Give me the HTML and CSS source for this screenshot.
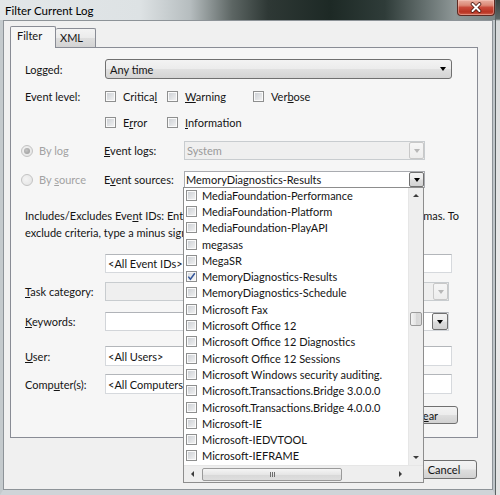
FILE: index.html
```html
<!DOCTYPE html>
<html lang="en">
<head>
<meta charset="utf-8">
<title>Filter Current Log</title>
<link rel="stylesheet" href="styles.css">
</head>
<body>
<div class="screen">
  <div class="window">
    <div class="titlebar">
      <span class="title">Filter Current Log</span>
      <div class="close-btn">
        <svg width="14" height="11" viewBox="0 0 14 11"><path d="M3.5 2 L10.5 9 M10.5 2 L3.5 9" stroke="#4a1710" stroke-width="3.6" stroke-linecap="round"/><path d="M3.5 2 L10.5 9 M10.5 2 L3.5 9" stroke="#fff" stroke-width="2" stroke-linecap="round"/></svg>
      </div>
    </div>
    <div class="frame">
      <div class="client">
        <div class="tabs">
          <div class="tab active">Filter</div>
          <div class="tab xml">XML</div>
        </div>
        <div class="panel">
          <div class="row r-logged">
            <span class="lbl">Logged:</span>
            <div class="combo btn-combo w-wide"><span>Any time</span><span class="arrow"></span></div>
          </div>
          <div class="row r-level1">
            <span class="lbl">Event level:</span>
            <span class="chk c1"><span class="cb"></span><span>Critica<u>l</u></span></span>
            <span class="chk c2"><span class="cb"></span><span><u>W</u>arning</span></span>
            <span class="chk"><span class="cb"></span><span>Ver<u>b</u>ose</span></span>
          </div>
          <div class="row r-level2">
            <span class="lbl"></span>
            <span class="chk c1"><span class="cb"></span><span>E<u>r</u>ror</span></span>
            <span class="chk c2"><span class="cb"></span><span><u>I</u>nformation</span></span>
          </div>
          <div class="row r-bylog">
            <span class="radio-col"><span class="radio on"></span><span>By lo<u>g</u></span></span>
            <span class="lbl2"><u>E</u>vent logs:</span>
            <div class="combo dis-combo w-src"><span>System</span><span class="dbtn dis"><span class="arrow"></span></span></div>
          </div>
          <div class="row r-bysrc">
            <span class="radio-col"><span class="radio"></span><span>By <u>s</u>ource</span></span>
            <span class="lbl2">E<u>v</u>ent sources:</span>
            <div class="sources">
              <div class="combo edit-combo w-src"><span class="src-text">MemoryDiagnostics-Results</span><span class="dbtn"><span class="arrow"></span></span></div>
              <div class="droplist">
                <div class="dl-body">
                  <ul class="dl-items">
                    <li><span class="cb"></span><span>MediaFoundation-Performance</span></li>
                    <li><span class="cb"></span><span>MediaFoundation-Platform</span></li>
                    <li><span class="cb"></span><span>MediaFoundation-PlayAPI</span></li>
                    <li><span class="cb"></span><span>megasas</span></li>
                    <li><span class="cb"></span><span>MegaSR</span></li>
                    <li><span class="cb checked"><svg width="9" height="9" viewBox="0 0 9 9"><path d="M1.3 4.6 L3.4 7.2 L7.8 1.2" fill="none" stroke="#34569a" stroke-width="1.5"/></svg></span><span>MemoryDiagnostics-Results</span></li>
                    <li><span class="cb"></span><span>MemoryDiagnostics-Schedule</span></li>
                    <li><span class="cb"></span><span>Microsoft Fax</span></li>
                    <li><span class="cb"></span><span>Microsoft Office 12</span></li>
                    <li><span class="cb"></span><span>Microsoft Office 12 Diagnostics</span></li>
                    <li><span class="cb"></span><span>Microsoft Office 12 Sessions</span></li>
                    <li><span class="cb"></span><span>Microsoft Windows security auditing.</span></li>
                    <li><span class="cb"></span><span>Microsoft.Transactions.Bridge 3.0.0.0</span></li>
                    <li><span class="cb"></span><span>Microsoft.Transactions.Bridge 4.0.0.0</span></li>
                    <li><span class="cb"></span><span>Microsoft-IE</span></li>
                    <li><span class="cb"></span><span>Microsoft-IEDVTOOL</span></li>
                    <li><span class="cb"></span><span>Microsoft-IEFRAME</span></li>
                  </ul>
                  <div class="vscroll">
                    <span class="sb-box"><span class="tri-up"></span></span>
                    <div class="vtrack"><div class="vthumb"></div></div>
                    <span class="sb-box"><span class="tri-down"></span></span>
                  </div>
                </div>
                <div class="hscroll">
                  <span class="sb-box h"><span class="tri-left"></span></span>
                  <div class="htrack"><div class="hthumb"><span class="grip"></span></div></div>
                  <span class="sb-box h"><span class="tri-right"></span></span>
                  <span class="corner"></span>
                </div>
              </div>
            </div>
          </div>
          <p class="desc">Includes/Excludes Eve<u>n</u>t IDs: Enter ID numbers and/or ID ranges separated by commas. To<br>exclude criteria, type a minus sign first. For example 1,3,5-99,-76</p>
          <div class="row r-ids">
            <span class="lbl"></span>
            <div class="field w-field">&lt;All Event IDs&gt;</div>
          </div>
          <div class="row r-task">
            <span class="lbl"><u>T</u>ask category:</span>
            <div class="combo dis-combo w-cat"><span></span><span class="dbtn dis"><span class="arrow"></span></span></div>
          </div>
          <div class="row r-kw">
            <span class="lbl"><u>K</u>eywords:</span>
            <div class="combo edit-combo w-cat"><span></span><span class="dbtn"><span class="arrow"></span></span></div>
          </div>
          <div class="row r-user">
            <span class="lbl"><u>U</u>ser:</span>
            <div class="field w-field">&lt;All Users&gt;</div>
          </div>
          <div class="row r-comp">
            <span class="lbl">Comp<u>u</u>ter(s):</span>
            <div class="field w-field">&lt;All Computers&gt;</div>
          </div>
          <div class="row r-clear">
            <span class="btn btn-clear"><span>Cl<u>e</u>ar</span></span>
          </div>
        </div>
        <div class="buttons">
          <span class="btn btn-main">OK</span>
          <span class="btn btn-main">Cancel</span>
        </div>
      </div>
    </div>
  </div>
  <div class="bgwin"></div>
</div>
</body>
</html>
```

FILE: styles.css
```css
* { box-sizing: border-box; margin: 0; padding: 0; }
html, body { width: 500px; height: 495px; overflow: hidden; }
body {
  font-family: Lato, "Liberation Sans", sans-serif;
  font-size: 11px;
  color: #141414;
  background: #e4e4e4;
}
u { text-decoration: underline; text-underline-offset: 1px; text-decoration-thickness: 1px; }

.screen { display: flex; width: 500px; height: 495px; }
.window { width: 495px; height: 495px; flex: none; display: flex; flex-direction: column; }

.titlebar {
  height: 20px; flex: none;
  display: flex; justify-content: space-between; align-items: flex-start;
  background: linear-gradient(90deg, #e3e7e9 0, #dde2e4 140px, #b6bdbf 190px, #5d6664 232px, #2e3835 268px, #1d2925 330px, #2f3c39 385px, #65706f 425px, #8e9797 455px, #7b8585 495px);
}
.title { font-size: 11.5px; line-height: 14px; padding: 4px 0 0 5px; color: #000; }
.close-btn {
  width: 38px; height: 16px;
  border: 1px solid #5e2a22; border-top: none; border-radius: 0 0 4px 4px;
  background: linear-gradient(#e9b0a2 0, #dc8977 35%, #c84a3a 50%, #b83322 80%, #cf624e 100%);
  box-shadow: inset 0 0 0 1px rgba(255, 215, 205, 0.4);
  display: flex; align-items: center; justify-content: center;
}

.frame {
  flex: 1; display: flex;
  border-left: 3px solid #c4cacd;
  border-right: 2px solid #bfc5c9;
  border-bottom: 5px solid #cfd4d8;
}
.client {
  flex: 1; display: flex; flex-direction: column;
  background: #f0f0f0;
  border: 1px solid #8d9398;
  padding: 5px 0 0 6px;
}

/* tabs */
.tabs { display: flex; align-items: flex-end; height: 21px; flex: none; }
.tab {
  height: 19px; line-height: 13px;
  border: 1px solid #898c95; border-bottom: none; border-radius: 2px 2px 0 0;
  background: linear-gradient(#f3f3f3, #ebebeb 48%, #dedede 52%, #d3d3d3);
}
.tab.active {
  width: 46px; height: 22px; margin-bottom: -1px;
  padding: 2px 0 0 6px;
  background: #f6f6f6;
  position: relative; z-index: 1;
}
.tab.xml { width: 40px; border-left: none; padding: 2px 0 0 4px; }

.panel {
  width: 468px; height: 391px; flex: none;
  border: 1px solid #898c95;
  background: #f6f6f6;
  padding: 11px 0 0 14px;
}

.row { display: flex; align-items: center; }
.lbl { width: 80px; flex: none; }
.lbl2 { width: 80px; flex: none; }
.r-logged { height: 20px; }
.r-level1 { height: 16px; margin-top: 9px; }
.r-level2 { height: 16px; margin-top: 10px; }
.r-bylog { height: 19px; margin-top: 11px; }
.r-bysrc { height: 17px; margin-top: 11px; }
.desc { margin-top: 19px; line-height: 17px; white-space: nowrap; }
.r-ids { height: 19px; margin-top: 13px; }
.r-task { height: 19px; margin-top: 9px; }
.r-kw { height: 19px; margin-top: 11px; }
.r-user { height: 20px; margin-top: 15px; }
.r-comp { height: 20px; margin-top: 8px; }
.r-clear { height: 18px; margin-top: 12px; justify-content: flex-end; padding-right: 19px; }

/* checkboxes & radios */
.chk { display: flex; align-items: center; gap: 7px; flex: none; }
.c1 { width: 62px; }
.c2 { width: 86px; }
.cb {
  width: 11px; height: 11px; flex: none;
  border: 1px solid #8e8f8f;
  background: linear-gradient(135deg, #c9cdd2, #f4f4f4);
  box-shadow: inset 0 0 0 1px #fafafa;
  display: flex; align-items: center; justify-content: center;
}
.cb.checked { background: linear-gradient(135deg, #d6dae0, #f7f7f7); }
.radio-col {
  width: 83px; margin-left: -4px; flex: none;
  display: flex; align-items: center; gap: 6px;
  color: #a2a2a2;
}
.radio {
  width: 12px; height: 12px; flex: none; border-radius: 50%;
  border: 1px solid #c3c3c3;
  background: radial-gradient(circle at 40% 40%, #f4f4f4, #e2e2e2);
  display: flex; align-items: center; justify-content: center;
}
.radio.on::after {
  content: ""; width: 6px; height: 6px; border-radius: 50%;
  background: radial-gradient(circle at 40% 40%, #c4c4c4, #979797);
}

/* combos */
.combo { display: flex; align-items: center; justify-content: space-between; flex: none; }
.w-wide { width: 347px; }
.w-src { width: 241px; }
.w-cat { width: 344px; }
.w-field { width: 347px; }
.btn-combo {
  height: 20px;
  border: 1px solid #707070; border-radius: 3px;
  background: linear-gradient(#f3f3f3, #ececec 48%, #e0e0e0 52%, #d4d4d4);
  padding: 0 5px 0 4px;
}
.arrow {
  width: 0; height: 0;
  border-left: 3.5px solid transparent;
  border-right: 3.5px solid transparent;
  border-top: 4px solid #000;
}
.dis-combo {
  height: 19px;
  border: 1px solid #c8cccf;
  background: #efefef;
  color: #9a9a9a;
  padding-left: 2px;
}
.edit-combo {
  height: 17px;
  border: 1px solid #a9abb0;
  background: #fff;
  padding-left: 1px;
}
.r-kw .edit-combo { height: 19px; border-color: #d2d5d9; border-top-color: #b0b3b8; }
.dbtn {
  width: 15px; height: 15px; flex: none;
  border: 1px solid #707070; border-radius: 2px;
  background: linear-gradient(#f3f3f3, #ececec 48%, #dedede 52%, #d2d2d2);
  display: flex; align-items: center; justify-content: center;
}
.r-kw .dbtn { height: 17px; width: 16px; }
.dbtn.dis { border-color: #c8c8c8; background: linear-gradient(#f6f6f6, #ededed); }
.dbtn.dis .arrow { border-top-color: #b7b7b7; }
.dis-combo .dbtn { height: 17px; }

.field {
  flex: none;
  height: 19px;
  border: 1px solid #d6d9dd; border-top-color: #b3b6ba;
  background: #fff;
  padding-left: 2px;
  display: flex; align-items: center;
}
.r-user .field, .r-comp .field { height: 20px; }

/* buttons */
.btn {
  display: flex; align-items: center; justify-content: center; flex: none;
  height: 19px;
  border: 1px solid #707070; border-radius: 3px;
  background: linear-gradient(#f3f3f3, #ececec 48%, #dedede 52%, #d1d1d1);
}
.btn-clear { width: 65px; height: 18px; }
.buttons { display: flex; justify-content: flex-end; gap: 7px; width: 467px; margin-top: 22px; flex: none; }
.btn-main { width: 66px; }

/* event sources dropdown */
.sources { position: relative; flex: none; }
.droplist {
  position: absolute; left: -1px; top: 16px; z-index: 5;
  width: 241px; height: 296px;
  border: 1px solid #8d8d8d;
  background: #fff;
  display: flex; flex-direction: column;
}
.dl-body { display: flex; height: 277px; flex: none; }
.dl-items { flex: 1; list-style: none; margin-top: -1px; }
.dl-items li {
  height: 16.3px;
  display: flex; align-items: center; gap: 5px;
  padding-left: 2px;
  white-space: nowrap;
}
.vscroll {
  width: 15px; flex: none;
  background: #eeeeee;
  border-left: 1px solid #e6e6e6;
  display: flex; flex-direction: column; align-items: center;
}
.sb-box { width: 15px; height: 15px; flex: none; display: flex; align-items: center; justify-content: center; }
.sb-box.h { width: 16px; height: 16px; }
.vtrack { flex: 1; width: 100%; padding: 0 1px; }
.vthumb {
  margin-top: 109px; height: 14px;
  border: 1px solid #9a9a9a; border-radius: 2px;
  background: linear-gradient(90deg, #f4f4f4, #e3e3e3 50%, #d6d6d6 51%, #dcdcdc);
}
.tri-up { width: 0; height: 0; border-left: 3px solid transparent; border-right: 3px solid transparent; border-bottom: 3px solid #3c3c3c; }
.tri-down { width: 0; height: 0; border-left: 3px solid transparent; border-right: 3px solid transparent; border-top: 3px solid #3c3c3c; }
.tri-left { width: 0; height: 0; border-top: 3px solid transparent; border-bottom: 3px solid transparent; border-right: 3px solid #3c3c3c; }
.tri-right { width: 0; height: 0; border-top: 3px solid transparent; border-bottom: 3px solid transparent; border-left: 3px solid #3c3c3c; }
.hscroll {
  flex: 1;
  display: flex; align-items: center;
  background: #eeeeee;
  border-top: 1px solid #e6e6e6;
}
.htrack { flex: 1; display: flex; align-items: center; }
.hthumb {
  margin-left: 2px; width: 140px; height: 13px;
  border: 1px solid #9a9a9a; border-radius: 2px;
  background: linear-gradient(#f5f5f5, #e6e6e6 50%, #d8d8d8 51%, #dedede);
  display: flex; align-items: center; justify-content: center;
}
.grip {
  width: 5px; height: 5px;
  background: repeating-linear-gradient(90deg, #6d6d6d 0 1px, transparent 1px 2px);
}
.corner { width: 15px; height: 100%; flex: none; background: #eeeeee; }

.bgwin {
  flex: 1;
  border-left: 1px solid #5a6163;
  background: linear-gradient(#37423f 0, #5d6766 19px, #d6d9da 21px, #ebebeb 60%, #e2e2e2 100%);
}
```
